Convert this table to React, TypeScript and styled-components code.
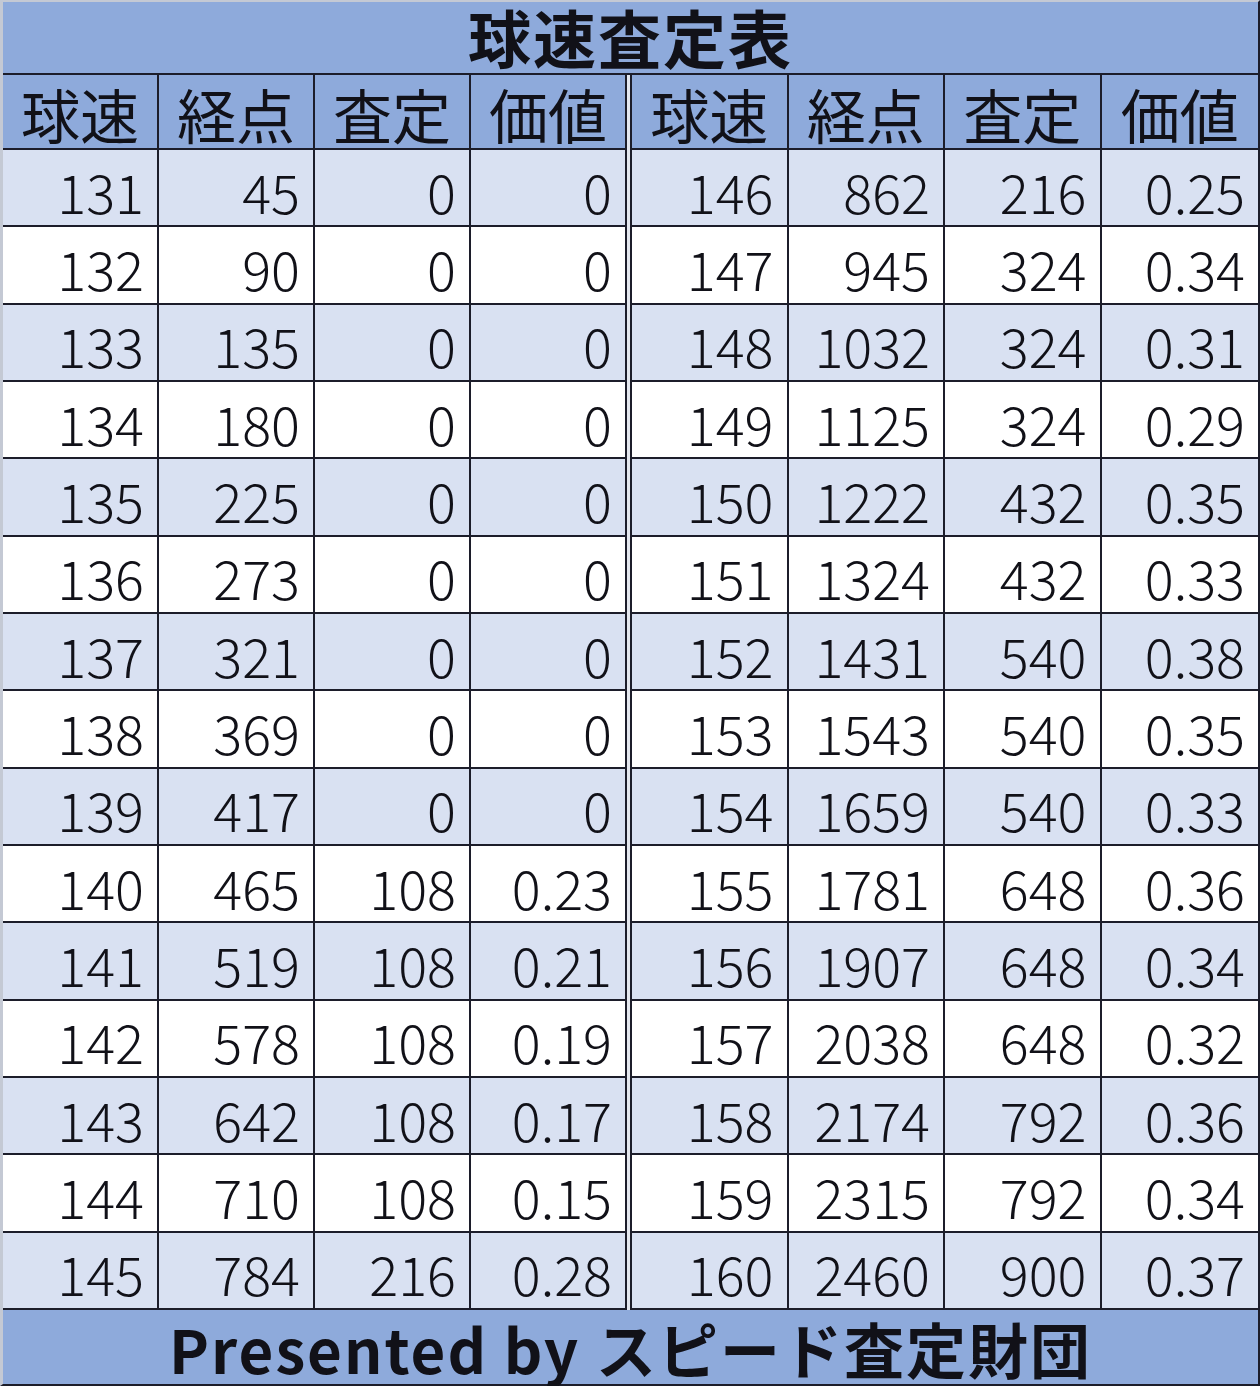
import * as React from "react";
import styled, { createGlobalStyle } from "styled-components";

const GlobalStyle = createGlobalStyle`
html, body {
  margin: 0;
  padding: 0;
  background: #ffffff;
}
body {
  font-family: "Noto Sans CJK JP", "Noto Sans", sans-serif;
  color: #111118;
}
`;

const LINE = "#1c1d2a";
const EDGE = "#c4c9d4";
const BLUE = "#8eaadb";
const PALE = "#d9e1f2";

interface Row {
  speed: number;
  exp: number;
  grade: number;
  value: string;
}

const toRows = (list: (number | string)[][]): Row[] =>
  list.map(([speed, exp, grade, value]) => ({
    speed: speed as number,
    exp: exp as number,
    grade: grade as number,
    value: value as string,
  }));

const leftRows = toRows([
  [131, 45, 0, "0"],
  [132, 90, 0, "0"],
  [133, 135, 0, "0"],
  [134, 180, 0, "0"],
  [135, 225, 0, "0"],
  [136, 273, 0, "0"],
  [137, 321, 0, "0"],
  [138, 369, 0, "0"],
  [139, 417, 0, "0"],
  [140, 465, 108, "0.23"],
  [141, 519, 108, "0.21"],
  [142, 578, 108, "0.19"],
  [143, 642, 108, "0.17"],
  [144, 710, 108, "0.15"],
  [145, 784, 216, "0.28"],
]);

const rightRows = toRows([
  [146, 862, 216, "0.25"],
  [147, 945, 324, "0.34"],
  [148, 1032, 324, "0.31"],
  [149, 1125, 324, "0.29"],
  [150, 1222, 432, "0.35"],
  [151, 1324, 432, "0.33"],
  [152, 1431, 540, "0.38"],
  [153, 1543, 540, "0.35"],
  [154, 1659, 540, "0.33"],
  [155, 1781, 648, "0.36"],
  [156, 1907, 648, "0.34"],
  [157, 2038, 648, "0.32"],
  [158, 2174, 792, "0.36"],
  [159, 2315, 792, "0.34"],
  [160, 2460, 900, "0.37"],
]);

const headings = ["球速", "経点", "査定", "価値"];

const Frame = styled.div`
  box-sizing: border-box;
  width: 1260px;
  height: 1386px;
  display: grid;
  grid-template-rows: 73px 1fr 74px;
  border-top: 2px solid ${EDGE};
  border-left: 3px solid ${EDGE};
  border-right: 2px solid ${LINE};
  border-bottom: 2px solid ${LINE};
`;

const Band = styled.div<{ $size: number }>`
  box-sizing: border-box;
  background: ${BLUE};
  display: flex;
  align-items: center;
  justify-content: center;
  font-size: ${(p) => p.$size}px;
  font-weight: 700;
  line-height: 1;
  letter-spacing: 2px;
`;

const Title = styled(Band)`
  border-bottom: 2px solid ${LINE};
  padding-bottom: 4px;
`;

const Footer = styled(Band)`
  padding-top: 2px;
`;

const Body = styled.div`
  display: flex;
  gap: 3px;
  background: #e4e7ee;
`;

const Half = styled.div<{ $right?: boolean }>`
  flex: ${(p) => (p.$right ? "1 1 0" : "0 0 624px")};
  display: grid;
  grid-template-columns: repeat(4, 1fr);
  grid-template-rows: 75px repeat(15, 1fr);
  ${(p) => (p.$right ? `border-left: 2px solid ${LINE};` : "")}
`;

const Cell = styled.div<{ $head?: boolean; $pale?: boolean; $last?: boolean }>`
  box-sizing: border-box;
  min-width: 0;
  display: flex;
  align-items: center;
  justify-content: ${(p) => (p.$head ? "center" : "flex-end")};
  padding: ${(p) => (p.$head ? "4px 0 0 0" : "6px 13px 0 0")};
  background: ${(p) => (p.$head ? BLUE : p.$pale ? PALE : "#ffffff")};
  border-bottom: 2px solid ${LINE};
  border-right: ${(p) => (p.$last ? "none" : `2px solid ${LINE}`)};
  font-size: ${(p) => (p.$head ? "59px" : "54px")};
  font-weight: ${(p) => (p.$head ? 400 : 300)};
  line-height: 1;
  white-space: nowrap;
`;

function TableHalf({ rows, right }: { rows: Row[]; right?: boolean }) {
  return (
    <Half $right={right}>
      {headings.map((h, i) => (
        <Cell key={h} $head $last={right && i === 3}>
          {h}
        </Cell>
      ))}
      {rows.map((r, idx) => {
        const pale = idx % 2 === 0;
        return (
          <React.Fragment key={r.speed}>
            <Cell $pale={pale}>{r.speed}</Cell>
            <Cell $pale={pale}>{r.exp}</Cell>
            <Cell $pale={pale}>{r.grade}</Cell>
            <Cell $pale={pale} $last={right}>
              {r.value}
            </Cell>
          </React.Fragment>
        );
      })}
    </Half>
  );
}

export default function App() {
  return (
    <>
      <GlobalStyle />
      <Frame>
        <Title $size={63}>球速査定表</Title>
        <Body>
          <TableHalf rows={leftRows} />
          <TableHalf rows={rightRows} right />
        </Body>
        <Footer $size={60}>Presented by スピード査定財団</Footer>
      </Frame>
    </>
  );
}
